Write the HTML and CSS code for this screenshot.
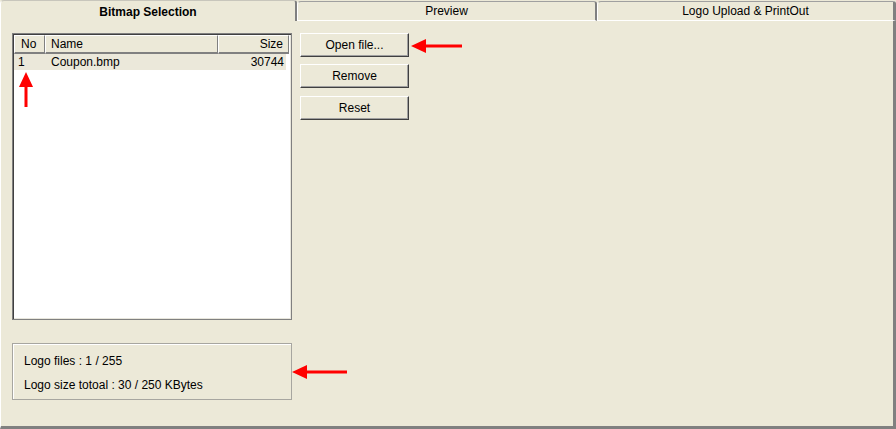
FILE: index.html
```html
<!DOCTYPE html>
<html>
<head>
<meta charset="utf-8">
<link rel="stylesheet" href="styles.css">
</head>
<body>
<div class="window">
  <div class="tabs">
    <div class="tab tab-active">Bitmap Selection</div>
    <div class="tab tab-mid">Preview</div>
    <div class="tab tab-last">Logo Upload &amp; PrintOut</div>
  </div>
  <div class="panel">
    <div class="left-col">
      <div class="list">
        <div class="list-head">
          <div class="hcell c-no">No</div>
          <div class="hcell c-name">Name</div>
          <div class="hcell c-size">Size</div>
        </div>
        <div class="list-row">
          <div class="rcell c-no">1</div>
          <div class="rcell c-name">Coupon.bmp</div>
          <div class="rcell c-size">30744</div>
        </div>
      </div>
      <div class="info">
        <div class="info-line">Logo files : 1 / 255</div>
        <div class="info-line">Logo size totoal : 30 / 250 KBytes</div>
      </div>
    </div>
    <div class="buttons">
      <button class="btn">Open file...</button>
      <button class="btn">Remove</button>
      <button class="btn">Reset</button>
    </div>
  </div>
</div>

<svg class="arrow arrow-open" width="52" height="16" viewBox="0 0 52 16">
  <polygon points="0,8 15,1 15,15" fill="#f00"/>
  <rect x="14" y="6.5" width="37" height="3" fill="#f00"/>
</svg>
<svg class="arrow arrow-up" width="16" height="36" viewBox="0 0 16 36">
  <polygon points="8,0 1,15 15,15" fill="#f00"/>
  <rect x="6.5" y="14" width="3" height="21" fill="#f00"/>
</svg>
<svg class="arrow arrow-info" width="56" height="16" viewBox="0 0 56 16">
  <polygon points="0,8 15,1 15,15" fill="#f00"/>
  <rect x="14" y="6.5" width="41" height="3" fill="#f00"/>
</svg>
</body>
</html>
```

FILE: styles.css
```css
html, body {
  margin: 0;
  padding: 0;
}
body {
  width: 896px;
  height: 429px;
  background: #ece9d8;
  font-family: "Liberation Sans", Arial, sans-serif;
  font-size: 12px;
  color: #000;
  position: relative;
  overflow: hidden;
}
.window {
  width: 896px;
  height: 429px;
  display: flex;
  flex-direction: column;
}
.tabs {
  display: flex;
  height: 21px;
  flex: none;
}
.tab {
  box-sizing: border-box;
  text-align: center;
  background: #ece9d8;
}
.tab-active {
  width: 297px;
  height: 21px;
  border-left: 1px solid #fff;
  border-top: 1px solid #c8c6bc;
  border-right: 2px solid #808080;
  border-top-left-radius: 4px;
  border-top-right-radius: 3px;
  font-weight: bold;
  padding-top: 2px;
  line-height: 18px;
}
.tab-mid, .tab-last {
  margin-top: 1px;
  height: 20px;
  border-left: 1px solid #fff;
  border-top: 1px solid #a0a0a0;
  border-right: 2px solid #808080;
  border-bottom: 1px solid #fff;
  border-top-left-radius: 4px;
  border-top-right-radius: 3px;
  padding-top: 1px;
  line-height: 17px;
}
.tab-mid {
  width: 300px;
}
.tab-last {
  width: 299px;
  border-right: 3px solid #808080;
}
.panel {
  flex: 1;
  box-sizing: border-box;
  border-left: 1px solid #fff;
  border-right: 3px solid #808080;
  border-bottom: 3px solid #808080;
  padding: 12px 0 0 11px;
  display: flex;
  gap: 8px;
  align-items: flex-start;
}
.left-col {
  width: 280px;
  display: flex;
  flex-direction: column;
  gap: 23px;
}
.list {
  box-sizing: border-box;
  height: 287px;
  background: #fff;
  border: 1px solid #808080;
  box-shadow: inset 1px 1px 0 #404040, inset -1px -1px 0 #e8e6dc;
  padding: 1px 2px 1px 1px;
}
.list-head {
  display: flex;
  height: 19px;
}
.hcell {
  box-sizing: border-box;
  height: 19px;
  background: #ece9d8;
  border-top: 1px solid #fff;
  border-left: 1px solid #fff;
  border-right: 1px solid #808080;
  border-bottom: 2px solid #808080;
  line-height: 16px;
  padding: 0 5px;
}
.c-no { width: 31px; }
.c-name { width: 173px; }
.c-size { flex: 1; text-align: right; }
.hcell.c-no { padding-left: 6px; }
.list-row {
  display: flex;
  height: 16px;
  background: #ebe8da;
  margin-right: 3px;
  line-height: 16px;
}
.rcell {
  box-sizing: border-box;
  padding: 0 5px;
}
.rcell.c-no { padding-left: 4px; }
.rcell.c-name { padding-left: 6px; }
.rcell.c-size { padding-right: 2px; }
.info {
  box-sizing: border-box;
  height: 57px;
  border: 1px solid #a7a6a0;
  box-shadow: inset 1px 1px 0 #fff;
  padding: 5px 0 0 11px;
}
.info-line {
  line-height: 24px;
}
.buttons {
  display: flex;
  flex-direction: column;
  gap: 7px;
}
.btn {
  box-sizing: border-box;
  width: 109px;
  height: 24px;
  margin: 0;
  background: #ece9d8;
  font-family: "Liberation Sans", Arial, sans-serif;
  font-size: 12px;
  color: #000;
  border-top: 1px solid #fff;
  border-left: 1px solid #fff;
  border-right: 1px solid #404040;
  border-bottom: 1px solid #404040;
  box-shadow: inset -1px -1px 0 #a0a0a0;
  padding: 0;
}
.btn + .btn + .btn {
  margin-top: 1px;
}
.arrow {
  position: absolute;
}
.arrow-open {
  left: 411px;
  top: 38px;
}
.arrow-up {
  left: 18px;
  top: 72px;
}
.arrow-info {
  left: 292px;
  top: 364px;
}
```
